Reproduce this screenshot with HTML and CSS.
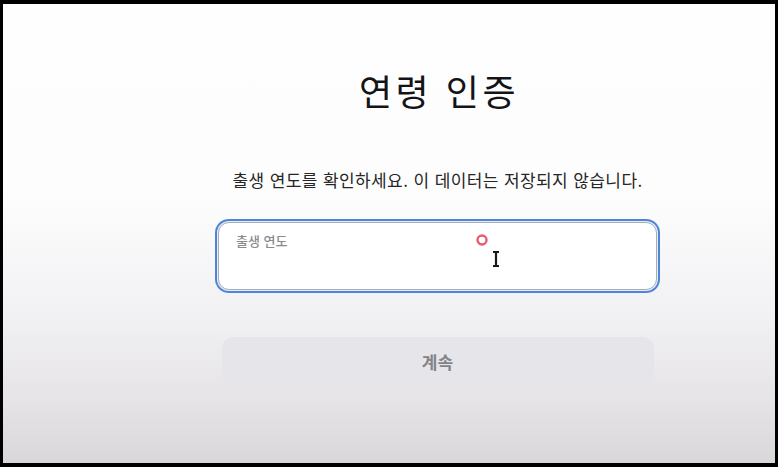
FILE: index.html
```html
<!DOCTYPE html>
<html lang="ko">
<head>
  <meta charset="UTF-8" />
  <meta name="viewport" content="width=device-width, initial-scale=1.0" />
  <title>연령 인증</title>
  <link rel="stylesheet" href="styles.css">
</head>
<body>
  <div class="frame">
    <div class="panel">
      <h1 class="title">연령 인증</h1>
      <p class="lead">출생 연도를 확인하세요. 이 데이터는 저장되지 않습니다.</p>

      <label class="field">
        <span class="field-label">출생 연도</span>
        <input class="field-input" type="text" inputmode="numeric" />
      </label>

      <button class="continue" disabled>계속</button>
    </div>

    <!-- pointer captured in the recording -->
    <svg class="pointer" width="30" height="34" viewBox="0 0 30 34">
      <circle cx="7" cy="6" r="4.5" fill="none" stroke="#e0405a" stroke-width="2.4" opacity="0.85" />
      <path d="M18 18h6M21 18v14M18 32h6" fill="none" stroke="#1a1a1a" stroke-width="2.2" />
    </svg>
  </div>
</body>
</html>
```

FILE: styles.css
```css
body, html {
  margin: 0;
  padding: 0;
  background: #000;
  height: 100%;
  overflow: hidden;
  font-family: "Noto Sans CJK KR", "Noto Sans", sans-serif;
}
.frame {
  position: relative;
  margin: 4px 3px 0 3px;
  height: 459px;
  background: linear-gradient(#fefefe 0%, #fdfdfd 42%, #f1f0f3 68%, #e6e4e7 86%, #d9d7da 100%);
}
.panel {
  width: 439px;
  margin-left: 215px;
  padding-top: 62px;
  display: flex;
  flex-direction: column;
  align-items: center;
}
.title {
  margin: 0;
  font-size: 36px;
  line-height: 48px;
  font-weight: 400;
  color: #141416;
  letter-spacing: 3.5px;
  padding-left: 3px;
}
.lead {
  margin: 54px 0 0 0;
  font-size: 17px;
  line-height: 24px;
  color: #262626;
  letter-spacing: 0.4px;
}
.field {
  margin-top: 30px;
  width: 100%;
  height: 68px;
  box-sizing: border-box;
  border: 1px solid #a7adb8;
  border-radius: 11px;
  background: #fff;
  box-shadow: 0 0 0 1px #e8eef8, 0 0 0 3px #4f85d6;
  padding: 9px 17px;
  display: flex;
  flex-direction: column;
}
.field-label {
  font-size: 13px;
  line-height: 18px;
  color: #8a8a8e;
  font-weight: 500;
}
.field-input {
  border: none;
  outline: none;
  background: transparent;
  font: inherit;
  font-size: 17px;
  padding: 0;
}
.continue {
  margin-top: 47px;
  width: 432px;
  height: 49px;
  border: none;
  border-radius: 12px;
  background: #e6e5ea;
  color: #838388;
  font-family: inherit;
  font-size: 17px;
  font-weight: 600;
}
.pointer {
  position: absolute;
  left: 472px;
  top: 230px;
}
```
